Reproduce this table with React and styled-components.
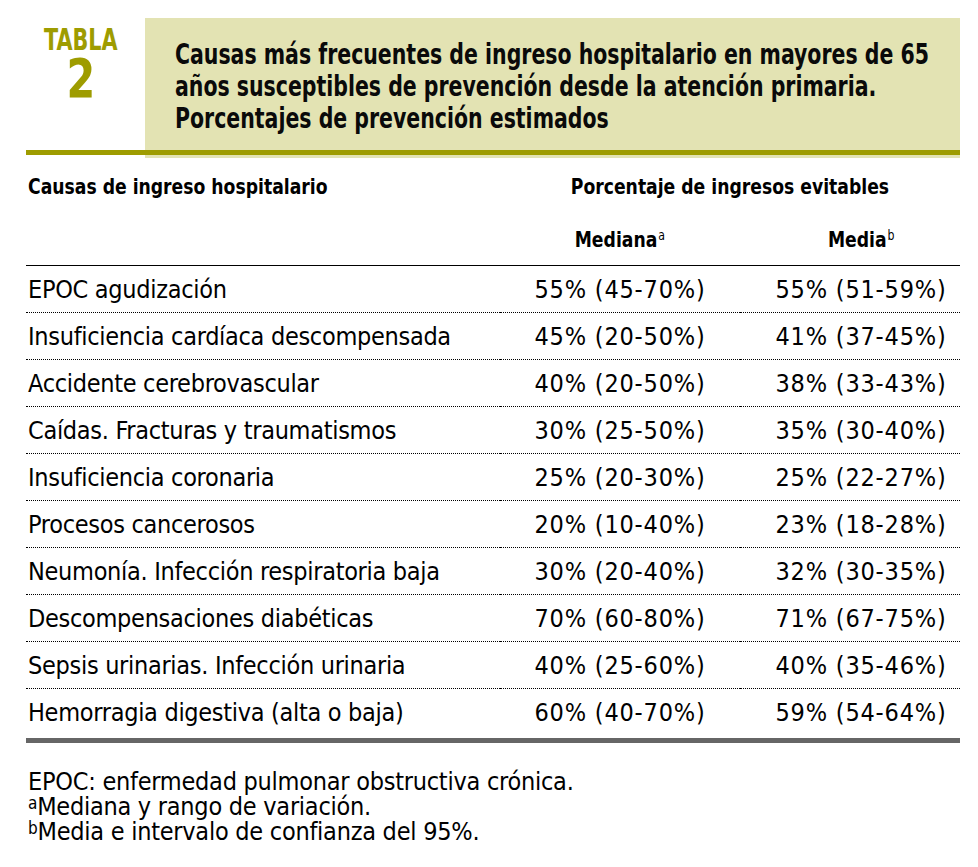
import React from 'react';
import styled, { createGlobalStyle } from 'styled-components';

const OLIVE = '#9e9c00';
const PALE = '#e3e3b3';
const FONT = '"DejaVu Sans Condensed", "Liberation Sans", sans-serif';

const rows = [
  ['EPOC agudización', '55% (45-70%)', '55% (51-59%)'],
  ['Insuficiencia cardíaca descompensada', '45% (20-50%)', '41% (37-45%)'],
  ['Accidente cerebrovascular', '40% (20-50%)', '38% (33-43%)'],
  ['Caídas. Fracturas y traumatismos', '30% (25-50%)', '35% (30-40%)'],
  ['Insuficiencia coronaria', '25% (20-30%)', '25% (22-27%)'],
  ['Procesos cancerosos', '20% (10-40%)', '23% (18-28%)'],
  ['Neumonía. Infección respiratoria baja', '30% (20-40%)', '32% (30-35%)'],
  ['Descompensaciones diabéticas', '70% (60-80%)', '71% (67-75%)'],
  ['Sepsis urinarias. Infección urinaria', '40% (25-60%)', '40% (35-46%)'],
  ['Hemorragia digestiva (alta o baja)', '60% (40-70%)', '59% (54-64%)'],
];

const GlobalStyle = createGlobalStyle`
  body {
    margin: 0;
    background: #fff;
    font-family: ${FONT};
    color: #000;
  }
`;

const Page = styled.div`
  width: 934px;
  padding: 18px 0 0 26px;
`;

const Header = styled.header`
  display: flex;
  align-items: flex-start;
`;

// squeezes bold glyphs to the heavy condensed face of the print
const Narrow = styled.span`
  display: inline-block;
  white-space: nowrap;
  transform: scaleX(${(p) => p.$x || 0.87});
  transform-origin: ${(p) => p.$origin || 'center'} top;
`;

const Label = styled.div`
  flex: 0 0 119px;
  height: 132px;
  border-bottom: 5px solid ${OLIVE};
  display: flex;
  flex-direction: column;
  align-items: center;
  color: ${OLIVE};
  font-weight: bold;
`;

const LabelWord = styled.div`
  margin: 9px 10px 0 0;
  font-size: 30px;
  line-height: 26px;
`;

const LabelNumber = styled.div`
  margin: 4px 10px 0 0;
  font-size: 54px;
  line-height: 44px;
`;

const TitleBox = styled.div`
  flex: 1;
  min-width: 0;
  overflow: hidden;
  height: 140px;
  box-sizing: border-box;
  padding: 20px 0 0 30px;
  background: linear-gradient(
    to bottom,
    ${PALE} 0 132px,
    ${OLIVE} 132px 137px,
    ${PALE} 137px
  );
`;

const Title = styled.h1`
  margin: 0;
  font-size: 29px;
  line-height: 32px;
  font-weight: bold;
  color: #0a0a0a;
  white-space: nowrap;
  transform: scaleX(0.785);
  transform-origin: 0 0;
`;

const Table = styled.table`
  width: 100%;
  border-collapse: collapse;
  margin-top: 2px;
`;

const HeadCell = styled.th`
  font-size: 22px;
  font-weight: bold;
  text-align: ${(p) => p.$align || 'left'};
  padding: ${(p) => p.$pad || '0'};
  height: ${(p) => p.$h}px;
  vertical-align: top;
  line-height: 26px;
  border-bottom: ${(p) => (p.$line ? '1px solid #000' : 'none')};
`;

const Sup = styled.sup`
  font-size: 14px;
  font-weight: normal;
  vertical-align: 0;
  position: relative;
  top: -7px;
  margin-left: 1px;
`;

const Row = styled.tr`
  border-bottom: ${(p) => (p.$last ? 'none' : '1px dotted #000')};
`;

const Cell = styled.td`
  font-size: 25px;
  line-height: 44px;
  letter-spacing: ${(p) => (p.$num ? '0.8px' : '-0.3px')};
  padding: 2px 0 ${(p) => (p.$last ? 3 : 0)}px ${(p) => p.$padL || 0}px;
  text-align: ${(p) => (p.$num ? 'center' : 'left')};
  white-space: nowrap;
`;

const Bar = styled.div`
  height: 5px;
  background: #666;
`;

const Notes = styled.div`
  padding: 26px 0 0 2px;
  font-size: 25px;
  line-height: 25px;
  letter-spacing: -0.25px;
`;

const NoteSup = styled.sup`
  font-size: 17px;
  line-height: 0;
  vertical-align: 0;
  position: relative;
  top: -6px;
`;

export default function App() {
  return (
    <>
      <GlobalStyle />
      <Page>
        <Header>
          <Label>
            <LabelWord>
              <Narrow $x={0.77}>TABLA</Narrow>
            </LabelWord>
            <LabelNumber>
              <Narrow $x={0.85}>2</Narrow>
            </LabelNumber>
          </Label>
          <TitleBox>
            <Title>
              Causas más frecuentes de ingreso hospitalario en mayores de 65
              <br />
              años susceptibles de prevención desde la atención primaria.
              <br />
              Porcentajes de prevención estimados
            </Title>
          </TitleBox>
        </Header>
        <Table>
          <colgroup>
            <col style={{ width: 474 }} />
            <col style={{ width: 240 }} />
            <col style={{ width: 220 }} />
          </colgroup>
          <thead>
            <tr>
              <HeadCell $h={38} $pad="14px 0 0 2px">
                <Narrow $origin="left">Causas de ingreso hospitalario</Narrow>
              </HeadCell>
              <HeadCell $h={38} $pad="14px 0 0 0" colSpan={2} $align="center">
                <Narrow>Porcentaje de ingresos evitables</Narrow>
              </HeadCell>
            </tr>
            <tr>
              <HeadCell $h={38} $line />
              <HeadCell $h={38} $line $align="center" $pad="15px 0 0 0">
                <Narrow>
                  Mediana<Sup>a</Sup>
                </Narrow>
              </HeadCell>
              <HeadCell $h={38} $line $align="center" $pad="15px 0 0 22px">
                <Narrow>
                  Media<Sup>b</Sup>
                </Narrow>
              </HeadCell>
            </tr>
          </thead>
          <tbody>
            {rows.map(([cause, median, mean], i) => {
              const last = i === rows.length - 1;
              return (
                <Row key={cause} $last={last}>
                  <Cell $padL={2} $last={last}>{cause}</Cell>
                  <Cell $num $last={last}>{median}</Cell>
                  <Cell $num $padL={22} $last={last}>{mean}</Cell>
                </Row>
              );
            })}
          </tbody>
        </Table>
        <Bar />
        <Notes>
          EPOC: enfermedad pulmonar obstructiva crónica.
          <br />
          <NoteSup>a</NoteSup>Mediana y rango de variación.
          <br />
          <NoteSup>b</NoteSup>Media e intervalo de confianza del 95%.
        </Notes>
      </Page>
    </>
  );
}
